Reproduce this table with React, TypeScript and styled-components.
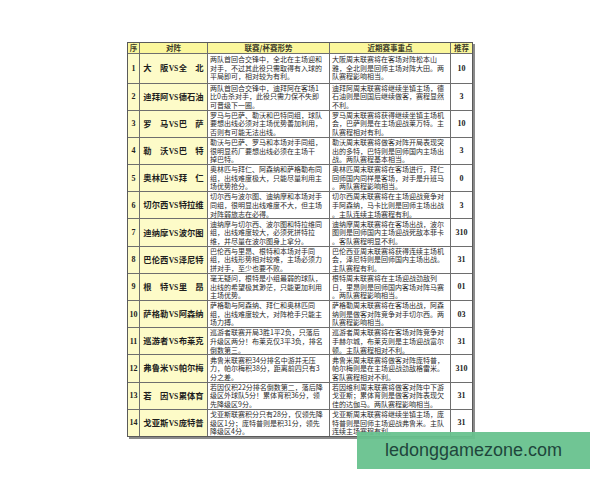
import React from "react";
import styled, { createGlobalStyle } from "styled-components";

const Global = createGlobalStyle`
  html, body { margin: 0; padding: 0; background: #ffffff; }
  body { font-family: "Noto Sans CJK SC", "Liberation Sans", sans-serif; }
`;

const Page = styled.div`
  position: relative;
  width: 600px;
  height: 480px;
  overflow: hidden;
  padding: 42px 0 0 127px;
  box-sizing: border-box;
`;

const Table = styled.div`
  display: grid;
  width: 346px;
  grid-template-columns: 11px 67px 121px 120px 21px;
  grid-template-rows: 9.5px 29px repeat(13, 26.2px);
  gap: 1px;
  background: #6e6e6e;
  border: 1px solid #5a5a5a;
  box-sizing: border-box;
  box-shadow: 2px 2px 0 #8a8a8a;
`;

const Head = styled.div`
  background: #fbf79c;
  color: #3a3a2a;
  font-family: "Noto Sans CJK SC", sans-serif;
  font-weight: 700;
  font-size: 7.5px;
  line-height: 9.5px;
  text-align: center;
  white-space: nowrap;
  overflow: hidden;
`;

const NumCell = styled.div`
  background: #fdfbc8;
  display: flex;
  align-items: center;
  justify-content: center;
  font-family: "Liberation Serif", serif;
  font-weight: 700;
  font-size: 8px;
  color: #222;
`;

const MatchCell = styled.div`
  background: #fdfbc8;
  display: flex;
  align-items: center;
  justify-content: center;
`;

const Pair = styled.span`
  font-family: "Noto Sans CJK SC", sans-serif;
  font-weight: 700;
  font-size: 8.3px;
  line-height: 10px;
  color: #1e1e1e;
  white-space: nowrap;
`;

const Team = styled.span`
  display: inline-block;
  width: 25px;
  text-align: justify;
  text-align-last: justify;
`;

const Vs = styled.span`
  font-family: "Liberation Serif", serif;
  font-weight: 700;
  font-size: 7.6px;
  margin: 0 0.3px;
`;

const TextCell = styled.div`
  background: #ffffff;
  padding: 0 0 0 2px;
  display: flex;
  flex-direction: column;
  justify-content: center;
  overflow: hidden;
`;

const Line = styled.div`
  font-family: "Noto Sans CJK SC", sans-serif;
  font-size: 7px;
  line-height: 8.6px;
  color: #2a2a2a;
  white-space: nowrap;
`;

const RecCell = styled.div`
  background: #ffffff;
  display: flex;
  align-items: center;
  justify-content: center;
  font-family: "Liberation Serif", serif;
  font-weight: 700;
  font-size: 8px;
  color: #222;
`;

const Watermark = styled.div`
  position: absolute;
  left: 357px;
  top: 432px;
  width: 233px;
  height: 37px;
  background: rgba(104, 194, 142, 0.95);
  display: flex;
  align-items: center;
  justify-content: center;
  font-family: "Liberation Sans", Arial, sans-serif;
  font-size: 18px;
  color: #1f463c;
`;

type Row = {
  a: string;
  b: string;
  league: string[];
  recent: string[];
  rec: string;
};

const rows: Row[] = [
  {
    a: "大阪", b: "全北",
    league: ["两队首回合交锋中，全北在主场迎和", "对手，不过其此役只需取得有入球的", "平局即可，相对较为有利。"],
    recent: ["大阪周末联赛将在客场对阵松本山", "雅，全北则是回师主场对阵大田。两", "队赛程影响相当。"],
    rec: "10",
  },
  {
    a: "迪拜阿", b: "德石油",
    league: ["两队首回合交锋中，迪拜阿在客场1", "比0击杀对手，此役只需力保不失即", "可晋级下一圈。"],
    recent: ["迪拜阿周末联赛将继续坐镇主场，德", "石油则是回国后继续做客，赛程显然", "不利。"],
    rec: "3",
  },
  {
    a: "罗马", b: "巴萨",
    league: ["罗马与巴萨、勒沃和巴特同组，球队", "要想出线必须对主场优势善加利用，", "否则有可能无法出线。"],
    recent: ["罗马周末联赛将获得继续坐镇主场机", "会，巴萨则是在主场迎战莱万特。主", "队赛程相对有利。"],
    rec: "10",
  },
  {
    a: "勒沃", b: "巴特",
    league: ["勒沃与巴萨、罗马和本场对手同组，", "很明显药厂要想出线必须在主场干", "掉巴特。"],
    recent: ["勒沃周末联赛将做客对阵开局表现突", "出的多特，巴特则是回师国内主场出", "战。两队赛程基本相当。"],
    rec: "3",
  },
  {
    a: "奥林匹", b: "拜仁",
    league: ["奥林匹与拜仁、阿森纳和萨格勒布同", "组，出线难度极大，只能尽量利用主", "场优势抢分。"],
    recent: ["奥林匹周末联赛将在客场进行，拜仁", "回师国内同样是客场，对手是升班马", "。两队赛程影响相当。"],
    rec: "0",
  },
  {
    a: "切尔西", b: "特拉维",
    league: ["切尔西与波尔图、迪纳摩和本场对手", "同组，很明显出线难度不大，但主场", "对阵弱旅志在必得。"],
    recent: ["切尔西周末联赛将在主场迎战竞争对", "手阿森纳，马卡比则是回师主场出战", "。主队连续主场赛程有利。"],
    rec: "3",
  },
  {
    a: "迪纳摩", b: "波尔图",
    league: ["迪纳摩与切尔西、波尔图和特拉维同", "组，出线难度较大，必须死拼特拉", "维，并尽量在波尔图身上拿分。"],
    recent: ["迪纳摩周末联赛将在客场出战，波尔", "图则是回师国内主场迎战死敌本菲卡", "。客队赛程明显不利。"],
    rec: "310",
  },
  {
    a: "巴伦西", b: "泽尼特",
    league: ["巴伦西与里昂、根特和本场对手同", "组，出线形势相对较难，主场必须力", "拼对手，至少也要不败。"],
    recent: ["巴伦西亚周末联赛将获得连续主场机", "会，泽尼特则是回师国内主场出战。", "主队赛程有利。"],
    rec: "31",
  },
  {
    a: "根特", b: "里昂",
    league: ["毫无疑问，根特是小组最弱的球队，", "出线的希望极其渺茫，只能更加利用", "主场优势。"],
    recent: ["根特周末联赛将在主场迎战劲敌列", "日，里昂则是回师国内客场对阵马赛", "。两队赛程影响相当。"],
    rec: "01",
  },
  {
    a: "萨格勒", b: "阿森纳",
    league: ["萨格勒与阿森纳、拜仁和奥林匹同", "组，出线难度较大，对阵枪手只能主", "场力搏。"],
    recent: ["萨格勒周末联赛将在客场出战，阿森", "纳则是做客对阵竞争对手切尔西。两", "队赛程影响相当。"],
    rec: "03",
  },
  {
    a: "巡游者", b: "布莱克",
    league: ["巡游者联赛开局3胜1平2负，只落后", "升级区两分！布莱克仅3平3负，排名", "倒数第三。"],
    recent: ["巡游者周末联赛将在客场对阵竞争对", "手赫尔城，布莱克则是主场迎战富尔", "顿。主队赛程相对不利。"],
    rec: "31",
  },
  {
    a: "弗鲁米", b: "帕尔梅",
    league: ["弗鲁米联赛积34分排名中游并无压", "力，帕尔梅积38分，距离前四只有3", "分之差。"],
    recent: ["弗鲁米周末联赛将做客对阵庞特普，", "帕尔梅则是在主场迎战劲敌格雷米。", "客队赛程相对不利。"],
    rec: "310",
  },
  {
    a: "若因", b: "累体育",
    league: ["若因仅积22分排名倒数第二，落后降", "级区外球队5分！累体育积36分，领", "先降级区9分。"],
    recent: ["若因维利周末联赛将做客对阵中下游", "戈亚斯；累体育则是做客对阵表现欠", "佳的达伽马。两队赛程影响相当。"],
    rec: "31",
  },
  {
    a: "戈亚斯", b: "庞特普",
    league: ["戈亚斯联赛积分只有28分，仅领先降", "级区1分；庞特普则是积31分，领先", "降级区4分。"],
    recent: ["戈亚斯周末联赛将继续坐镇主场，庞", "特普则是回师主场迎战弗鲁米。主队", "连续主场赛程有利。"],
    rec: "31",
  },
];

export default function App() {
  return (
    <>
      <Global />
      <Page>
        <Table>
          <Head>序</Head>
          <Head>对阵</Head>
          <Head>联赛/杯赛形势</Head>
          <Head>近期赛事重点</Head>
          <Head>推荐</Head>
          {rows.map((r, i) => (
            <React.Fragment key={i}>
              <NumCell>{i + 1}</NumCell>
              <MatchCell>
                <Pair>
                  <Team>{r.a}</Team>
                  <Vs>VS</Vs>
                  <Team>{r.b}</Team>
                </Pair>
              </MatchCell>
              <TextCell>
                {r.league.map((l, j) => (
                  <Line key={j}>{l}</Line>
                ))}
              </TextCell>
              <TextCell>
                {r.recent.map((l, j) => (
                  <Line key={j}>{l}</Line>
                ))}
              </TextCell>
              <RecCell>{r.rec}</RecCell>
            </React.Fragment>
          ))}
        </Table>
        <Watermark>ledonggamezone.com</Watermark>
      </Page>
    </>
  );
}
